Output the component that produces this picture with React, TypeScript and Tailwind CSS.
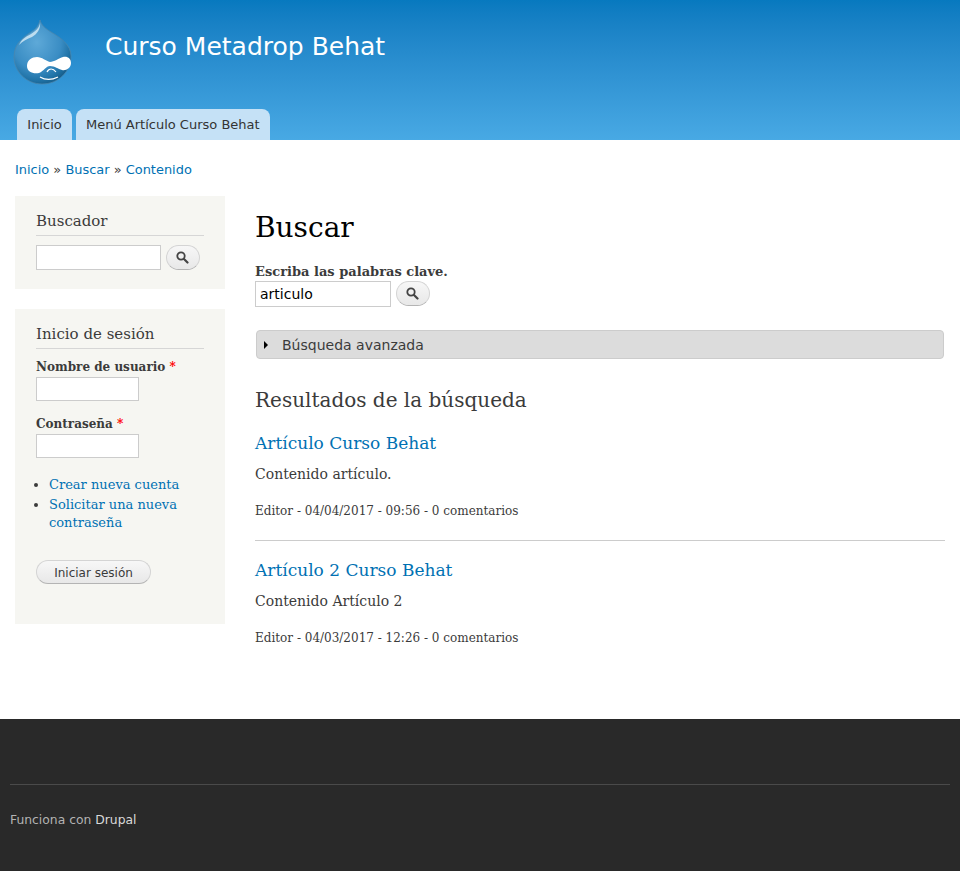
const sans = "font-['DejaVu_Sans',sans-serif]";

function Logo() {
  return (
    <svg width="60" height="66" viewBox="0 0 60 66" className="block">
      <defs>
        <radialGradient id="dropFill" cx="40%" cy="35%" r="68%">
          <stop offset="0%" stopColor="#5ea9d8" />
          <stop offset="62%" stopColor="#3a8dc4" />
          <stop offset="88%" stopColor="#1f72a6" />
          <stop offset="100%" stopColor="#175f8c" />
        </radialGradient>
      </defs>
      <path d="M27 1C28 6 33 10 38 13C48 19 58 26 58 37C58 53 45 65 29 65C13 65 1 52 1 38C1 24 11 18 18 13C23 10 26 6 27 1Z" fill="url(#dropFill)" stroke="#4a86ad" strokeWidth="0.800" />
      <path d="M27 3C27 8 23 12 18 15C12 18 8 21 6 26C10 22 14 20 19 18C24 15 28 10 27 3Z" fill="#e2f1fa" fillOpacity="0.750" />
      <path d="M14 47C14 41 19 38 24 38C29 38 33 42 37 43C41 43 46 39 50 38C55 37 58 40 58 44C58 49 53 52 49 51C45 50 42 47 37 47C33 47 31 52 26 54C20 55 14 53 14 47Z" fill="#ffffff" />
      <path d="M34 53C36 49 40 49 43 53" fill="none" stroke="#ffffff" strokeWidth="1.200" />
      <path d="M27 58C32 61 39 61 45 58" fill="none" stroke="#ffffff" strokeWidth="1.200" />
    </svg>
  );
}

function SearchIcon() {
  return (
    <svg width="13" height="13" viewBox="0 0 13 13" className="block">
      <circle cx="5" cy="5" r="3.700" fill="none" stroke="#444444" strokeWidth="1.800" />
      <path d="M8 8L11.500 11.500" stroke="#444444" strokeWidth="2.200" strokeLinecap="round" />
    </svg>
  );
}

function SearchButton() {
  return (
    <button className="flex h-[25px] w-[34px] items-center justify-center rounded-[13px] border border-[#d4d4d4] border-b-[#b4b4b4] bg-gradient-to-b from-[#f7f7f7] to-[#e8e8e8] pr-[1px]">
      <SearchIcon />
    </button>
  );
}

function Block({ title, children, className }: { title: string; children: React.ReactNode; className?: string }) {
  return (
    <div className={`bg-[#f6f6f2] px-[21px] ${className ?? ""}`}>
      <h2 className="border-b border-[#d6d6d6] pb-[4px] text-[15px] leading-[20px] font-normal text-[#3b3b3b]">{title}</h2>
      {children}
    </div>
  );
}

function Result({ title, body, meta }: { title: string; body: string; meta: string }) {
  return (
    <div>
      <h3 className="text-[17px] leading-[24px] font-normal text-[#0071b3]">{title}</h3>
      <p className="mt-[9px] text-[14px] leading-[21px] text-[#3b3b3b]">{body}</p>
      <p className="mt-[17px] text-[12px] leading-[18px] text-[#3b3b3b]">{meta}</p>
    </div>
  );
}

export default function App() {
  return (
    <div className="flex min-h-[871px] w-[960px] flex-col bg-white font-['DejaVu_Serif',serif] text-[#3b3b3b]">
      <header className={`h-[140px] bg-gradient-to-b from-[#0779bf] to-[#48a9e4] ${sans}`}>
        <div className="flex h-[109px] items-start">
          <div className="ml-[13px] mt-[19px]"><Logo /></div>
          <div className="ml-[32px] mt-[30px] text-[25px] leading-[34px] text-white">Curso Metadrop Behat</div>
        </div>
        <nav className="flex h-[31px] gap-[4px] pl-[17px] text-[13px] text-[#333333]">
          <a className="flex w-[55px] items-center justify-center rounded-t-[8px] bg-[#c5e1f6]">Inicio</a>
          <a className="flex items-center rounded-t-[8px] bg-[#c5e1f6] px-[10px]">Menú Artículo Curso Behat</a>
        </nav>
      </header>

      <div className={`mt-[21px] h-[18px] pl-[15px] text-[12.950px] leading-[18px] text-[#3b3b3b] ${sans}`}>
        <a className="text-[#0071b3]">Inicio</a> » <a className="text-[#0071b3]">Buscar</a> » <a className="text-[#0071b3]">Contenido</a>
      </div>

      <div className="mt-[17px] flex flex-1 items-start pl-[15px] pr-[15px]">
        <aside className="flex w-[210px] shrink-0 flex-col gap-[20px]">
          <Block title="Buscador" className="h-[93px] pt-[15px]">
            <div className="mt-[9px] flex items-start gap-[5px]">
              <input className="h-[25px] w-[125px] border border-[#cccccc] bg-white" />
              <SearchButton />
            </div>
          </Block>
          <Block title="Inicio de sesión" className="h-[315px] pt-[15px]">
            <div className="mt-[9px] mb-[1px] text-[12px] leading-[18px] font-bold">Nombre de usuario <span className="text-[#ff0000]">*</span></div>
            <input className="block h-[24px] w-[103px] border border-[#cccccc] bg-white" />
            <div className="mt-[14px] mb-[1px] text-[12px] leading-[18px] font-bold">Contraseña <span className="text-[#ff0000]">*</span></div>
            <input className="block h-[24px] w-[103px] border border-[#cccccc] bg-white" />
            <ul className="mt-[18px] list-disc pl-[13px] text-[13px] leading-[18px] text-[#0071b3] marker:text-[#3b3b3b]">
              <li className="mb-[2px]">Crear nueva cuenta</li>
              <li>Solicitar una nueva contraseña</li>
            </ul>
            <button className={`mt-[28px] block h-[24px] w-[115px] rounded-[12px] border border-[#d4d4d4] border-b-[#b4b4b4] bg-gradient-to-b from-[#f7f7f7] to-[#e8e8e8] pt-[1px] text-[12px] text-[#3a3a3a] ${sans}`}>Iniciar sesión</button>
          </Block>
        </aside>

        <main className="ml-[30px] min-w-0 flex-1">
          <h1 className="mt-[13px] text-[28px] leading-[38px] font-normal text-black">Buscar</h1>
          <div className="mt-[16px] text-[13px] leading-[18px] font-bold">Escriba las palabras clave.</div>
          <div className="flex items-start gap-[5px]">
            <input readOnly value="articulo" className={`h-[26px] w-[136px] border border-[#cccccc] bg-white px-[4px] text-[14px] text-black ${sans}`} />
            <SearchButton />
          </div>
          <div className={`ml-[1px] mr-[1px] mt-[23px] flex h-[29px] items-center rounded-[4px] border border-[#cccccc] bg-[#dcdcdc] pl-[7px] pt-[1px] text-[14px] text-[#3b3b3b] ${sans}`}>
            <span className="h-0 w-0 border-y-[4px] border-l-[4px] border-y-transparent border-l-black" />
            <span className="ml-[14px]">Búsqueda avanzada</span>
          </div>
          <h2 className="mt-[27px] text-[20px] leading-[28px] font-normal text-[#3b3b3b]">Resultados de la búsqueda</h2>
          <div className="mt-[17px] border-b border-[#cccccc] pb-[20px]">
            <Result title="Artículo Curso Behat" body="Contenido artículo." meta="Editor - 04/04/2017 - 09:56 - 0 comentarios" />
          </div>
          <div className="mt-[17px]">
            <Result title="Artículo 2 Curso Behat" body="Contenido Artículo 2" meta="Editor - 04/03/2017 - 12:26 - 0 comentarios" />
          </div>
        </main>
      </div>

      <footer className={`h-[152px] bg-[#292929] px-[10px] pt-[65px] text-[12.350px] text-[#b3b3b3] ${sans}`}>
        <div className="border-t border-[#4a4a4a] pt-[27px] leading-[16px]">
          Funciona con <a className="text-[#d9d9d9]">Drupal</a>
        </div>
      </footer>
    </div>
  );
}
